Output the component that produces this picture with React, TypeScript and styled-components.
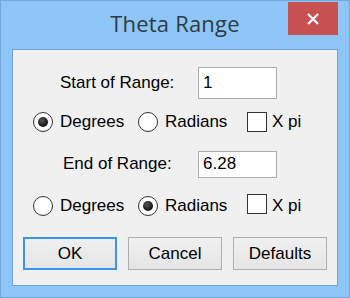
import React from 'react'
import styled, { createGlobalStyle } from 'styled-components'

const GlobalStyle = createGlobalStyle`
  html, body {
    margin: 0;
    padding: 0;
    background: #8ec7f7;
  }
`

export default function App() {
  return (
    <>
      <GlobalStyle />
      <Window>
        <TitleBar>
          <Title>Theta Range</Title>
          <CloseButton aria-label="Close">
            <svg width="12" height="12" viewBox="0 0 12 12">
              <path d="M1 1 L11 11 M11 1 L1 11" stroke="#fff" strokeWidth="2.2" />
            </svg>
          </CloseButton>
        </TitleBar>
        <Client>
          <FieldRow $top={17}>
            <FieldLabel $left={47}>Start of Range:</FieldLabel>
            <TextBox $height={32} defaultValue="1" />
          </FieldRow>
          <OptionRow $top={13}>
            <Radio checked />
            <OptionText $width={78}>Degrees</OptionText>
            <Radio />
            <OptionText $width={82}>Radians</OptionText>
            <CheckBox $lift={0} />
            <OptionText $gap={5}>X pi</OptionText>
          </OptionRow>
          <FieldRow $top={16}>
            <FieldLabel $left={50}>End of Range:</FieldLabel>
            <TextBox $height={27} defaultValue="6.28" />
          </FieldRow>
          <OptionRow $top={16}>
            <Radio />
            <OptionText $width={78}>Degrees</OptionText>
            <Radio checked />
            <OptionText $width={82}>Radians</OptionText>
            <CheckBox $lift={2} />
            <OptionText $gap={5}>X pi</OptionText>
          </OptionRow>
          <ButtonRow>
            <DialogButton $focused>OK</DialogButton>
            <DialogButton>Cancel</DialogButton>
            <DialogButton>Defaults</DialogButton>
          </ButtonRow>
        </Client>
      </Window>
    </>
  )
}

const Radio = ({ checked }: { checked?: boolean }) => (
  <RadioCircle>{checked && <RadioDot />}</RadioCircle>
)

const Window = styled.div`
  width: 350px;
  height: 298px;
  box-sizing: border-box;
  border: 1px solid #72a9da;
  background: #8ec7f7;
  display: flex;
  flex-direction: column;
  font-family: 'Liberation Sans', Arial, sans-serif;
`

const TitleBar = styled.div`
  position: relative;
  height: 48px;
  display: flex;
  align-items: flex-start;
  justify-content: center;
`

const Title = styled.div`
  margin-top: 7px;
  font-family: 'Open Sans', 'Noto Sans', sans-serif;
  font-size: 22px;
  letter-spacing: 0.2px;
  color: #2e3a44;
`

const CloseButton = styled.button`
  position: absolute;
  top: 1px;
  right: 11px;
  width: 50px;
  height: 33px;
  border: 0;
  padding: 0;
  background: #c75050;
  display: flex;
  align-items: center;
  justify-content: center;
`

const Client = styled.div`
  flex: 1;
  margin: 0 11px 11px 11px;
  border: 1px solid #6fa3d2;
  background: #f0f0f0;
  display: flex;
  flex-direction: column;
`

const FieldRow = styled.div<{ $top: number }>`
  display: flex;
  align-items: center;
  margin-top: ${(p) => p.$top}px;
  height: 32px;
`

const FieldLabel = styled.span<{ $left: number }>`
  margin-left: ${(p) => p.$left}px;
  width: ${(p) => 185 - p.$left}px;
  font-size: 17px;
  color: #000;
`

const TextBox = styled.input<{ $height: number }>`
  box-sizing: border-box;
  width: 79px;
  height: ${(p) => p.$height}px;
  border: 1px solid #abadb3;
  background: #fff;
  padding: 0 0 0 4px;
  font-family: 'Liberation Sans', Arial, sans-serif;
  font-size: 17px;
  color: #000;
  outline: none;
`

const OptionRow = styled.div<{ $top: number }>`
  display: flex;
  align-items: center;
  margin-top: ${(p) => p.$top}px;
  padding-left: 20px;
  height: 20px;
`

const OptionText = styled.span<{ $width?: number; $gap?: number }>`
  margin-left: ${(p) => p.$gap ?? 7}px;
  width: ${(p) => (p.$width ? `${p.$width}px` : 'auto')};
  font-size: 17px;
  color: #000;
`

const RadioCircle = styled.span`
  box-sizing: border-box;
  width: 20px;
  height: 20px;
  border-radius: 50%;
  border: 1px solid #333;
  background: radial-gradient(circle at 50% 40%, #fff 0%, #fff 55%, #e6e6e6 100%);
  display: flex;
  align-items: center;
  justify-content: center;
  flex-shrink: 0;
`

const RadioDot = styled.span`
  width: 10px;
  height: 10px;
  border-radius: 50%;
  background: radial-gradient(circle at 40% 35%, #555 0%, #111 70%);
`

const CheckBox = styled.span<{ $lift: number }>`
  box-sizing: border-box;
  width: 20px;
  height: 20px;
  margin-top: ${(p) => -p.$lift * 2}px;
  border: 1px solid #333;
  background: #fff;
  flex-shrink: 0;
`

const ButtonRow = styled.div`
  display: flex;
  gap: 11px;
  margin-top: 21px;
  padding-left: 10px;
`

const DialogButton = styled.button<{ $focused?: boolean }>`
  box-sizing: border-box;
  width: 94px;
  height: 33px;
  border: 1px solid ${(p) => (p.$focused ? '#3c95e8' : '#adadad')};
  box-shadow: ${(p) => (p.$focused ? 'inset 0 0 0 1px #3c95e8' : 'none')};
  background: linear-gradient(#f0f0f0, #e5e5e5);
  font-family: 'Liberation Sans', Arial, sans-serif;
  font-size: 17px;
  color: #000;
  padding: 0;
`
